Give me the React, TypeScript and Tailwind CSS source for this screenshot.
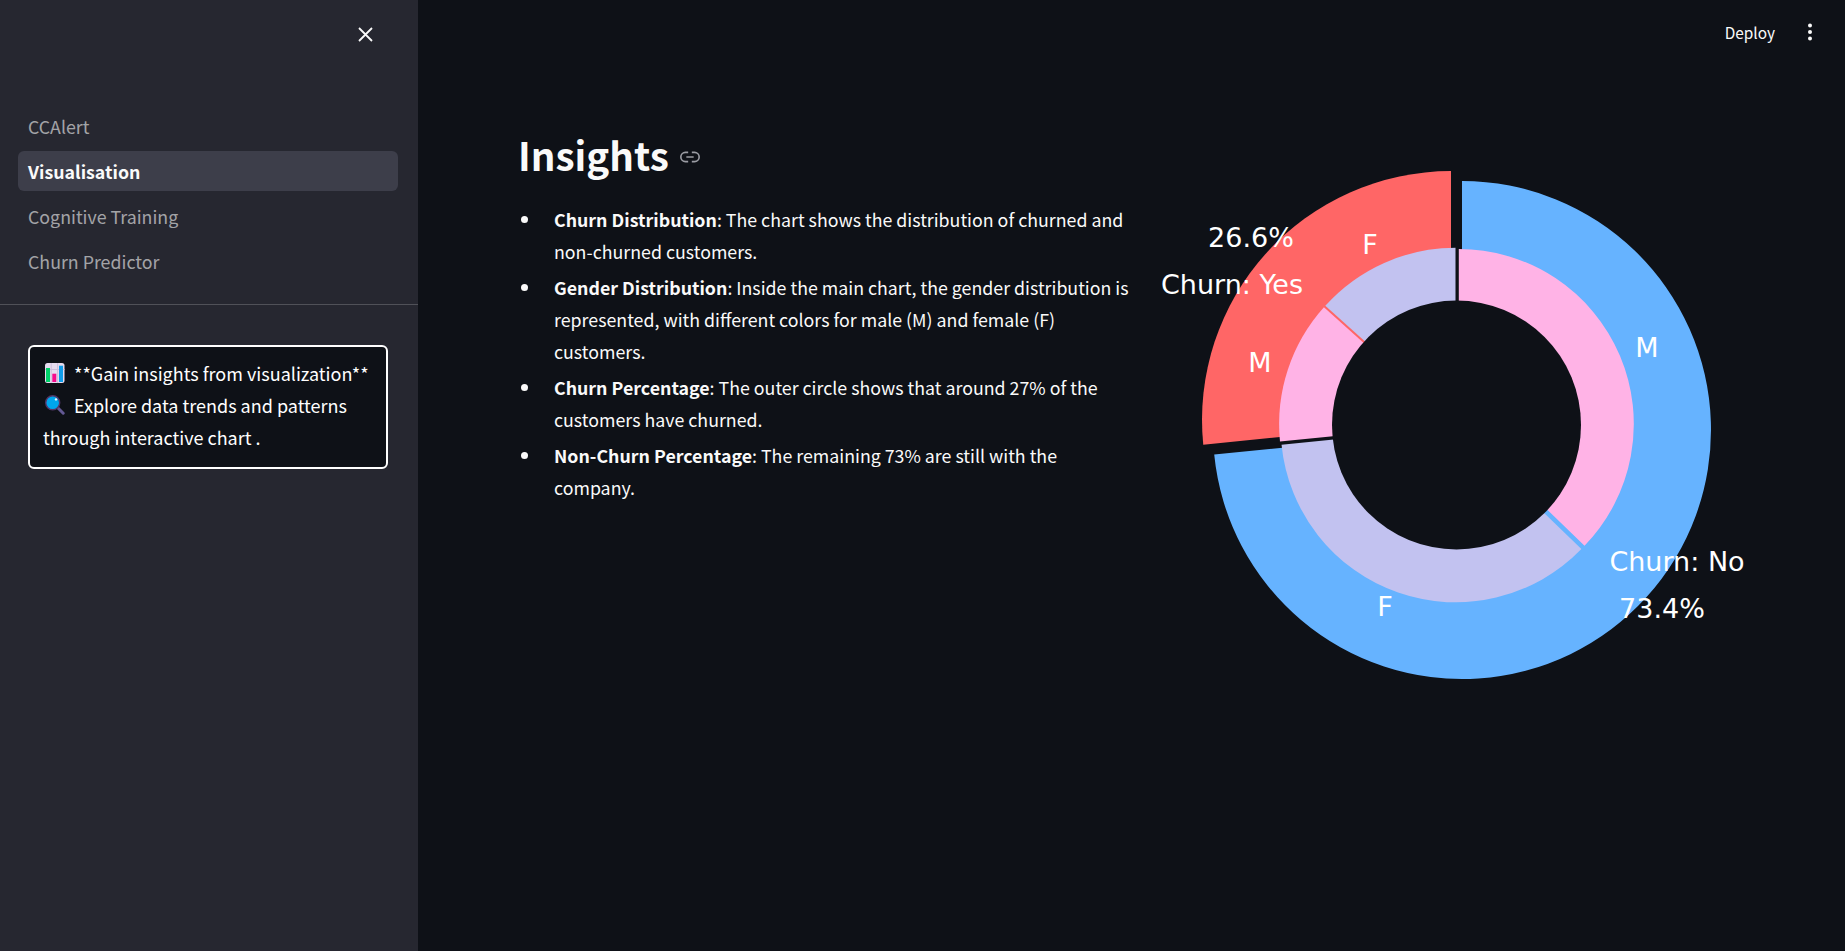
const FONT = '"Noto Sans CJK JP", "Liberation Sans", sans-serif';

// polar helper for the pie: angles in degrees, counter-clockwise from +x, like the chart
const pt = (cx: number, cy: number, r: number, a: number) => {
  const t = (a * Math.PI) / 180;
  return `${(cx + r * Math.cos(t)).toFixed(2)} ${(cy - r * Math.sin(t)).toFixed(2)}`;
};

const wedge = (cx: number, cy: number, r: number, a0: number, a1: number) =>
  `M${cx} ${cy}L${pt(cx, cy, r, a0)}A${r} ${r} 0 ${a1 - a0 > 180 ? 1 : 0} 0 ${pt(cx, cy, r, a1)}Z`;

const exploded = (r: number, e: number, a0: number, a1: number) => {
  const m = (((a0 + a1) / 2) * Math.PI) / 180;
  return wedge(BASE_X + e * Math.cos(m), BASE_Y - e * Math.sin(m), r, a0, a1);
};

// coordinates inside the chart svg
const BASE_X = 296.5;
const BASE_Y = 275;

const ChartLabel = ({ x, y, children }: { x: number; y: number; children: string }) => (
  <text x={x} y={y} textAnchor="middle" fill="#fff" fontSize={27} fontFamily='"DejaVu Sans", sans-serif'>
    {children}
  </text>
);

const DonutChart = () => (
  <svg width={620} height={600} viewBox="0 0 620 600" className="block shrink-0">
    <path d={exploded(249, 7.4, 90, 185.68)} fill="#ff6666" />
    <path d={exploded(249, 7.4, 185.68, 450)} fill="#66b3ff" />
    <path d={exploded(175, 2.5, 90, 138.07)} fill="#c2c2f0" />
    <path d={exploded(175, 2.5, 138.07, 185.68)} fill="#ffb3e6" />
    <path d={exploded(175, 2.5, 185.68, 315.92)} fill="#c2c2f0" />
    <path d={exploded(175, 2.5, 315.92, 450)} fill="#ffb3e6" />
    <circle cx={BASE_X} cy={BASE_Y} r={124.5} fill="#0e1117" />
    <ChartLabel x={91} y={97}>26.6%</ChartLabel>
    <ChartLabel x={72} y={144}>Churn: Yes</ChartLabel>
    <ChartLabel x={210} y={104}>F</ChartLabel>
    <ChartLabel x={100} y={222}>M</ChartLabel>
    <ChartLabel x={487} y={207}>M</ChartLabel>
    <ChartLabel x={225} y={466}>F</ChartLabel>
    <ChartLabel x={517} y={421}>Churn: No</ChartLabel>
    <ChartLabel x={502} y={468}>73.4%</ChartLabel>
  </svg>
);

const BarEmoji = () => (
  <svg width={20} height={20} viewBox="0 0 20 20" className="shrink-0">
    <rect x="0" y="0" width="19.5" height="20" rx="2.5" fill="#e6dcef" />
    <path d="M6.2 0v20M12.6 0v20M0 6.5h19.5" stroke="#cdbfdc" strokeWidth="1" />
    <rect x="1" y="5" width="4" height="14" fill="#00d26a" />
    <rect x="7.3" y="10.7" width="4" height="8.3" fill="#f70a8d" />
    <rect x="14" y="2.7" width="4" height="16.3" fill="#0f9dea" />
  </svg>
);

const SearchEmoji = () => (
  <svg width={20} height={20} viewBox="0 0 20 20" className="shrink-0">
    <path d="M12.5 12.5l5.7 5.7" stroke="#635994" strokeWidth="3" strokeLinecap="round" />
    <circle cx="7.7" cy="7.7" r="7" fill="#00a6ed" stroke="#533566" strokeWidth="1.4" />
    <circle cx="11" cy="4.4" r="1.2" fill="#e8f8ff" />
  </svg>
);

const navItems = ["CCAlert", "Visualisation", "Cognitive Training", "Churn Predictor"];

const Sidebar = () => (
  <aside className="flex h-full w-[418px] shrink-0 flex-col bg-[#262730]">
    <div className="flex h-[106px] shrink-0 justify-end pr-[44px] pt-[26px]">
      <svg width={17} height={17} viewBox="0 0 17 17" fill="none" stroke="#fafafa" strokeWidth="1.8">
        <path d="M2 2l13 13M15 2L2 15" />
      </svg>
    </div>
    <nav className="flex flex-col gap-[5px] pl-[18px] pr-[20px]">
      {navItems.map((item) => (
        <a
          key={item}
          className={
            item === "Visualisation"
              ? "flex h-[40px] items-center rounded-md bg-[#3d3e4a] px-[10px] text-[17.8px] font-semibold text-[#fafafa]"
              : "flex h-[40px] items-center rounded-md px-[10px] text-[17.8px] text-[#fafafa]/60"
          }
        >
          {item}
        </a>
      ))}
    </nav>
    <div className="mt-[23px] h-px bg-[#fafafa]/20" />
    <div className="ml-[28px] mr-[30px] mt-[40px] rounded-md border-2 border-white bg-[#0e1117] px-[13px] pb-[14px] pt-[10px] text-[18px] leading-[32px] text-white">
      <div className="ml-[2px] flex items-center gap-[9px]">
        <BarEmoji />
        <span>**Gain insights from visualization**</span>
      </div>
      <div className="ml-[2px] flex items-center gap-[9px]">
        <SearchEmoji />
        <span>Explore data trends and patterns</span>
      </div>
      <div>through interactive chart .</div>
    </div>
  </aside>
);

const bullets: [string, string][] = [
  ["Churn Distribution", ": The chart shows the distribution of churned and non-churned customers."],
  ["Gender Distribution", ": Inside the main chart, the gender distribution is represented, with different colors for male (M) and female (F) customers."],
  ["Churn Percentage", ": The outer circle shows that around 27% of the customers have churned."],
  ["Non-Churn Percentage", ": The remaining 73% are still with the company."],
];

const Insights = () => (
  <div className="w-[641px] shrink-0 pt-[125px]">
    <div className="-ml-px flex items-center gap-[10px]">
      <h1 className="text-[38.6px] font-semibold leading-[58px] text-[#fafafa]">Insights</h1>
      <svg width={22} height={22} viewBox="0 0 24 24" fill="none" stroke="#9a9ca3" strokeWidth="1.8" className="mt-[6px]">
        <path d="M10 7H7a5 5 0 000 10h3M14 7h3a5 5 0 010 10h-3M8 12h8" />
      </svg>
    </div>
    <ul className="mt-[20px] flex w-[613px] flex-col gap-[4px] text-[17.8px] leading-[32px] text-[#fafafa]">
      {bullets.map(([head, rest]) => (
        <li key={head} className="flex">
          <span className="w-[35px] shrink-0 pl-[2px] pt-[13px]">
            <span className="block h-[7px] w-[7px] rounded-full bg-[#fafafa]" />
          </span>
          <span>
            <strong className="font-semibold">{head}</strong>
            {rest}
          </span>
        </li>
      ))}
    </ul>
  </div>
);

export default function App() {
  return (
    <div className="flex h-[951px] w-full overflow-hidden bg-[#0e1117]" style={{ fontFamily: FONT }}>
      <Sidebar />
      <main className="relative flex flex-1 pl-[101px]">
        <Insights />
        <div className="pt-[150px]">
          <DonutChart />
        </div>
        <div className="absolute right-[32px] top-[20px] flex items-center gap-[32px] text-[15.4px] leading-[24px] text-[#fafafa]">
          <span>Deploy</span>
          <svg width={6} height={20} viewBox="0 0 6 20" fill="#fafafa">
            <circle cx="3" cy="3.5" r="2" />
            <circle cx="3" cy="10" r="2" />
            <circle cx="3" cy="16.5" r="2" />
          </svg>
        </div>
      </main>
    </div>
  );
}
